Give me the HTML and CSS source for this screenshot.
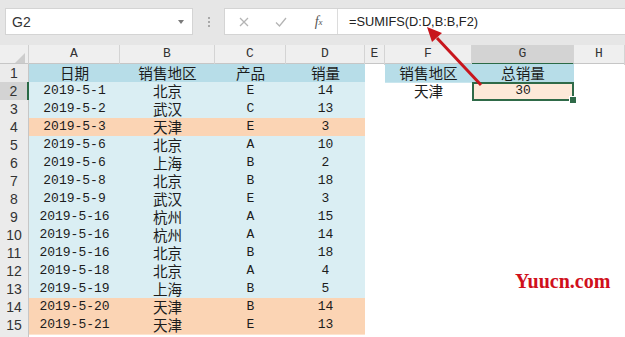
FILE: index.html
```html
<!DOCTYPE html>
<html lang="zh-CN">
<head>
    <meta charset="UTF-8">
    <title>SUMIFS</title>
    <link rel="stylesheet" href="styles.css">
</head>
<body>
    <div class="topbar">
        <div class="namebox"><span>G2</span><span class="caret"></span></div>
        <div class="grip"><i></i><i></i><i></i></div>
        <div class="fbar">
            <div class="fbtns">
                <span class="btn">
                    <svg width="10" height="10" viewBox="0 0 10 10"><path d="M1 1L9 9M9 1L1 9" stroke="#b4b4b4" stroke-width="1.3" fill="none"/></svg>
                </span>
                <span class="btn">
                    <svg width="12" height="10" viewBox="0 0 12 10"><path d="M1 5.5L4.5 9L11 1" stroke="#b4b4b4" stroke-width="1.3" fill="none"/></svg>
                </span>
                <span class="btn fx">f<sub>x</sub></span>
            </div>
            <div class="formula">=SUMIFS(D:D,B:B,F2)</div>
        </div>
    </div>

    <div class="sheet">
        <div class="row head">
            <div class="corner"><span class="tri"></span></div>
            <div class="ch">A</div>
            <div class="ch">B</div>
            <div class="ch">C</div>
            <div class="ch">D</div>
            <div class="ch">E</div>
            <div class="ch">F</div>
            <div class="ch sel">G</div>
            <div class="ch">H</div>
        </div>

        <div class="row">
            <div class="rn">1</div>
            <div class="c h zh">日期</div>
            <div class="c h zh">销售地区</div>
            <div class="c h zh">产品</div>
            <div class="c h zh">销量</div>
            <div class="c"></div>
            <div class="c h zh">销售地区</div>
            <div class="c h zh">总销量</div>
            <div class="c"></div>
        </div>
        <div class="row">
            <div class="rn sel">2</div>
            <div class="c b">2019-5-1</div>
            <div class="c b zh">北京</div>
            <div class="c b">E</div>
            <div class="c b">14</div>
            <div class="c"></div>
            <div class="c zh">天津</div>
            <div class="c active">30</div>
            <div class="c"></div>
        </div>
        <div class="row">
            <div class="rn">3</div>
            <div class="c b">2019-5-2</div>
            <div class="c b zh">武汉</div>
            <div class="c b">C</div>
            <div class="c b">13</div>
        </div>
        <div class="row">
            <div class="rn">4</div>
            <div class="c p">2019-5-3</div>
            <div class="c p zh">天津</div>
            <div class="c p">E</div>
            <div class="c p">3</div>
        </div>
        <div class="row">
            <div class="rn">5</div>
            <div class="c b">2019-5-6</div>
            <div class="c b zh">北京</div>
            <div class="c b">A</div>
            <div class="c b">10</div>
        </div>
        <div class="row">
            <div class="rn">6</div>
            <div class="c b">2019-5-6</div>
            <div class="c b zh">上海</div>
            <div class="c b">B</div>
            <div class="c b">2</div>
        </div>
        <div class="row">
            <div class="rn">7</div>
            <div class="c b">2019-5-8</div>
            <div class="c b zh">北京</div>
            <div class="c b">B</div>
            <div class="c b">18</div>
        </div>
        <div class="row">
            <div class="rn">8</div>
            <div class="c b">2019-5-9</div>
            <div class="c b zh">武汉</div>
            <div class="c b">E</div>
            <div class="c b">3</div>
        </div>
        <div class="row">
            <div class="rn">9</div>
            <div class="c b">2019-5-16</div>
            <div class="c b zh">杭州</div>
            <div class="c b">A</div>
            <div class="c b">15</div>
        </div>
        <div class="row">
            <div class="rn">10</div>
            <div class="c b">2019-5-16</div>
            <div class="c b zh">杭州</div>
            <div class="c b">A</div>
            <div class="c b">14</div>
        </div>
        <div class="row">
            <div class="rn">11</div>
            <div class="c b">2019-5-16</div>
            <div class="c b zh">北京</div>
            <div class="c b">B</div>
            <div class="c b">18</div>
        </div>
        <div class="row">
            <div class="rn">12</div>
            <div class="c b">2019-5-18</div>
            <div class="c b zh">北京</div>
            <div class="c b">A</div>
            <div class="c b">4</div>
        </div>
        <div class="row">
            <div class="rn">13</div>
            <div class="c b">2019-5-19</div>
            <div class="c b zh">上海</div>
            <div class="c b">B</div>
            <div class="c b">5</div>
        </div>
        <div class="row">
            <div class="rn">14</div>
            <div class="c p">2019-5-20</div>
            <div class="c p zh">天津</div>
            <div class="c p">B</div>
            <div class="c p">14</div>
        </div>
        <div class="row">
            <div class="rn">15</div>
            <div class="c p">2019-5-21</div>
            <div class="c p zh">天津</div>
            <div class="c p">E</div>
            <div class="c p">13</div>
        </div>
        <div class="row">
            <div class="rn"></div>
        </div>
    </div>

    <!-- red arrow pointing at the formula -->
    <svg class="arrow" width="625" height="337" viewBox="0 0 625 337">
        <line x1="481" y1="85" x2="437" y2="38" stroke="#c8161d" stroke-width="3"/>
        <polygon points="427,27 442,33 432,42" fill="#c8161d"/>
    </svg>

    <div class="mark">Yuucn.com</div>
</body>
</html>
```

FILE: styles.css
```css
* {
    box-sizing: border-box;
}

body {
    margin: 0;
    width: 625px;
    height: 337px;
    overflow: hidden;
    position: relative;
    background-color: #fff;
    font-family: "Liberation Sans", "Noto Sans CJK SC", sans-serif;
    color: #222;
}

/* name box + formula bar */
.topbar {
    display: flex;
    align-items: flex-start;
    height: 45px;
    padding: 8px 0 0 5px;
    background-color: #e6e6e6;
}

.namebox {
    width: 188px;
    height: 27px;
    display: flex;
    align-items: center;
    justify-content: space-between;
    padding: 0 8px 0 6px;
    background-color: #fff;
    border: 1px solid #d4d4d4;
    font-size: 14px;
    color: #333;
}

.caret {
    width: 0;
    height: 0;
    border-left: 3.5px solid transparent;
    border-right: 3.5px solid transparent;
    border-top: 4px solid #7a7a7a;
}

.grip {
    width: 31px;
    height: 27px;
    display: flex;
    flex-direction: column;
    align-items: center;
    justify-content: center;
    gap: 2px;
}

.grip i {
    width: 2px;
    height: 2px;
    background-color: #a8a8a8;
}

.fbar {
    flex: 1;
    height: 27px;
    display: flex;
    align-items: center;
    background-color: #fff;
    border: 1px solid #d4d4d4;
    border-right: none;
}

.fbtns {
    width: 113px;
    height: 100%;
    display: flex;
    align-items: center;
    border-right: 1px solid #dcdcdc;
}

.btn {
    width: 38px;
    display: flex;
    justify-content: center;
    align-items: center;
}

.btn.fx {
    width: 37px;
    font-family: "Liberation Serif", serif;
    font-style: italic;
    font-size: 14px;
    color: #555;
}

.btn.fx sub {
    font-size: 9px;
}

.formula {
    padding-left: 11px;
    font-size: 12.8px;
    color: #222;
}

/* worksheet grid */
.row {
    display: grid;
    grid-template-columns: 29px 91px 95px 71px 79px 20px 87px 102px 51px;
    height: 18px;
}

.row.head {
    height: 19px;
    background-color: #efefef;
    border-bottom: 1px solid #c6c6c6;
}

.corner {
    display: flex;
    justify-content: flex-end;
    align-items: flex-end;
    padding: 0 3px 2px 0;
    border-right: 1px solid #d0d0d0;
}

.tri {
    width: 0;
    height: 0;
    border-left: 10px solid transparent;
    border-bottom: 10px solid #cdcdcd;
}

.ch {
    text-align: center;
    line-height: 18px;
    font-family: "Liberation Mono", monospace;
    font-size: 13px;
    color: #333;
    border-right: 1px solid #d4d4d4;
}

.ch.sel {
    background-color: #d3d3d3;
    border-bottom: 2px solid #2a6a45;
}

.rn {
    text-align: center;
    line-height: 18px;
    font-size: 14px;
    color: #333;
    background-color: #ebebeb;
    border-right: 1px solid #c6c6c6;
    border-bottom: 1px solid #dadada;
}

.rn.sel {
    background-color: #d3d3d3;
    border-right: 2px solid #2a6a45;
}

.c {
    text-align: center;
    line-height: 18px;
    font-family: "Liberation Mono", "Noto Sans CJK SC", monospace;
    font-size: 13px;
    color: #1c1c1c;
}

.c.zh {
    font-family: "Noto Sans CJK SC", sans-serif;
    font-size: 14.6px;
    line-height: 17px;
}

.c.h {
    background-color: #b7dde8;
    border-bottom: 1px solid #c9e6ee;
}

.c.b {
    background-color: #daeef3;
    border-bottom: 1px solid #ebf6f9;
}

.c.p {
    background-color: #fbd4b4;
    border-bottom: 1px solid #fde4cf;
}

.c.active {
    position: relative;
    line-height: 14px;
    background-color: #fde9d9;
    border: 2px solid #2f6a48;
}

.c.active::after {
    content: "";
    position: absolute;
    right: -5px;
    bottom: -5px;
    width: 6px;
    height: 6px;
    background-color: #2f6a48;
    border: 1px solid #fff;
}

/* overlays */
.arrow {
    position: absolute;
    left: 0;
    top: 0;
    pointer-events: none;
}

.mark {
    position: absolute;
    left: 515px;
    top: 270px;
    font-family: "Liberation Serif", serif;
    font-weight: bold;
    font-size: 20px;
    color: #d0101c;
}
```
